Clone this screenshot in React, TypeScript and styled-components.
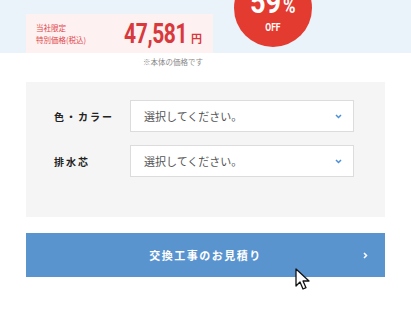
import React from "react";
import styled, { createGlobalStyle } from "styled-components";

const GlobalStyle = createGlobalStyle`
  body {
    margin: 0;
    background: #fff;
    font-family: "Noto Sans CJK JP", "Noto Sans", sans-serif;
  }
`;

const Page = styled.div`
  position: relative;
  width: 411px;
  height: 329px;
  overflow: hidden;
`;

const PriceBand = styled.div`
  display: flex;
  height: 53px;
  background: #eaf3fa;
  padding-left: 26px;
  box-sizing: border-box;
`;

const PriceBox = styled.div`
  display: flex;
  align-items: center;
  justify-content: space-between;
  align-self: flex-end;
  width: 187px;
  height: 39px;
  padding: 0 11px 0 10px;
  box-sizing: border-box;
  background: #fdf1f1;
`;

const PriceLabel = styled.div`
  color: #e0474a;
  font-size: 7.5px;
  line-height: 12px;
`;

const Price = styled.div`
  display: flex;
  align-items: baseline;
  color: #d8393c;
`;

const Amount = styled.span`
  display: inline-block;
  font-family: Roboto, sans-serif;
  font-weight: 700;
  font-size: 28px;
  letter-spacing: -0.5px;
  transform: scaleX(0.75);
  transform-origin: right center;
  margin-right: 4px;
`;

const Yen = styled.span`
  font-size: 11px;
  font-weight: 700;
`;

const OffBadge = styled.div`
  display: flex;
  flex-direction: column;
  align-items: center;
  justify-content: flex-end;
  width: 78px;
  height: 78px;
  margin: -31px 0 0 21px;
  padding-bottom: 14px;
  box-sizing: border-box;
  border-radius: 50%;
  background: #e33b30;
  color: #fff;
  font-family: Roboto, sans-serif;
  font-weight: 700;
`;

const Percent = styled.div`
  font-size: 32px;
  line-height: 22px;
  transform: scaleX(0.85);
  small {
    font-size: 20px;
    margin-left: 2px;
  }
`;

const Off = styled.div`
  font-size: 10px;
  line-height: 10px;
  margin-top: 6px;
  transform: scaleX(0.85);
`;

const Note = styled.div`
  margin: 4px 0 0 143px;
  color: #8a8a8a;
  font-size: 7.5px;
  line-height: 10px;
`;

const OptionPanel = styled.div`
  display: flex;
  flex-direction: column;
  gap: 13px;
  margin: 15px 26px 0;
  padding: 18px 31px 40px 28px;
  background: #f5f5f5;
`;

const OptionRow = styled.div`
  display: flex;
  align-items: center;
`;

const OptionLabel = styled.div`
  width: 76px;
  color: #222;
  font-size: 10px;
  font-weight: 700;
  letter-spacing: 2px;
`;

const Select = styled.div`
  display: flex;
  align-items: center;
  justify-content: space-between;
  width: 224px;
  height: 32px;
  padding: 0 11px 0 13px;
  box-sizing: border-box;
  background: #fff;
  border: 1px solid #dcdcdc;
  color: #555;
  font-size: 11px;
`;

const QuoteButton = styled.div`
  position: relative;
  display: flex;
  align-items: center;
  justify-content: center;
  height: 44px;
  margin: 16px 26px 0;
  background: #5a94cf;
  color: #fff;
  font-size: 11px;
  font-weight: 700;
  letter-spacing: 1.5px;
`;

const Arrow = styled.svg`
  position: absolute;
  right: 17px;
  top: 19px;
`;

const Cursor = styled.svg`
  position: absolute;
  left: 295px;
  top: 268px;
`;

function Chevron() {
  return (
    <svg width="7" height="5" viewBox="0 0 7 5">
      <path d="M1 1l2.5 2.5L6 1" fill="none" stroke="#4a8fd8" strokeWidth="1.5" />
    </svg>
  );
}

const options = ["色・カラー", "排水芯"];

export default function App() {
  return (
    <Page>
      <GlobalStyle />
      <PriceBand>
        <PriceBox>
          <PriceLabel>
            当社限定
            <br />
            特別価格(税込)
          </PriceLabel>
          <Price>
            <Amount>47,581</Amount>
            <Yen>円</Yen>
          </Price>
        </PriceBox>
        <OffBadge>
          <Percent>
            59<small>%</small>
          </Percent>
          <Off>OFF</Off>
        </OffBadge>
      </PriceBand>
      <Note>※本体の価格です</Note>
      <OptionPanel>
        {options.map((o) => (
          <OptionRow key={o}>
            <OptionLabel>{o}</OptionLabel>
            <Select>
              選択してください。
              <Chevron />
            </Select>
          </OptionRow>
        ))}
      </OptionPanel>
      <QuoteButton>
        交換工事のお見積り
        <Arrow width="5" height="7" viewBox="0 0 5 7">
          <path d="M1 1l2.5 2.5L1 6" fill="none" stroke="#fff" strokeWidth="1.5" />
        </Arrow>
      </QuoteButton>
      <Cursor width="16" height="23" viewBox="0 0 16 23">
        <path
          d="M1 1v17l4-4 3 7 3-1.3-3-6.7h6z"
          fill="#fff"
          stroke="#111"
          strokeWidth="1.3"
          strokeLinejoin="round"
        />
      </Cursor>
    </Page>
  );
}
